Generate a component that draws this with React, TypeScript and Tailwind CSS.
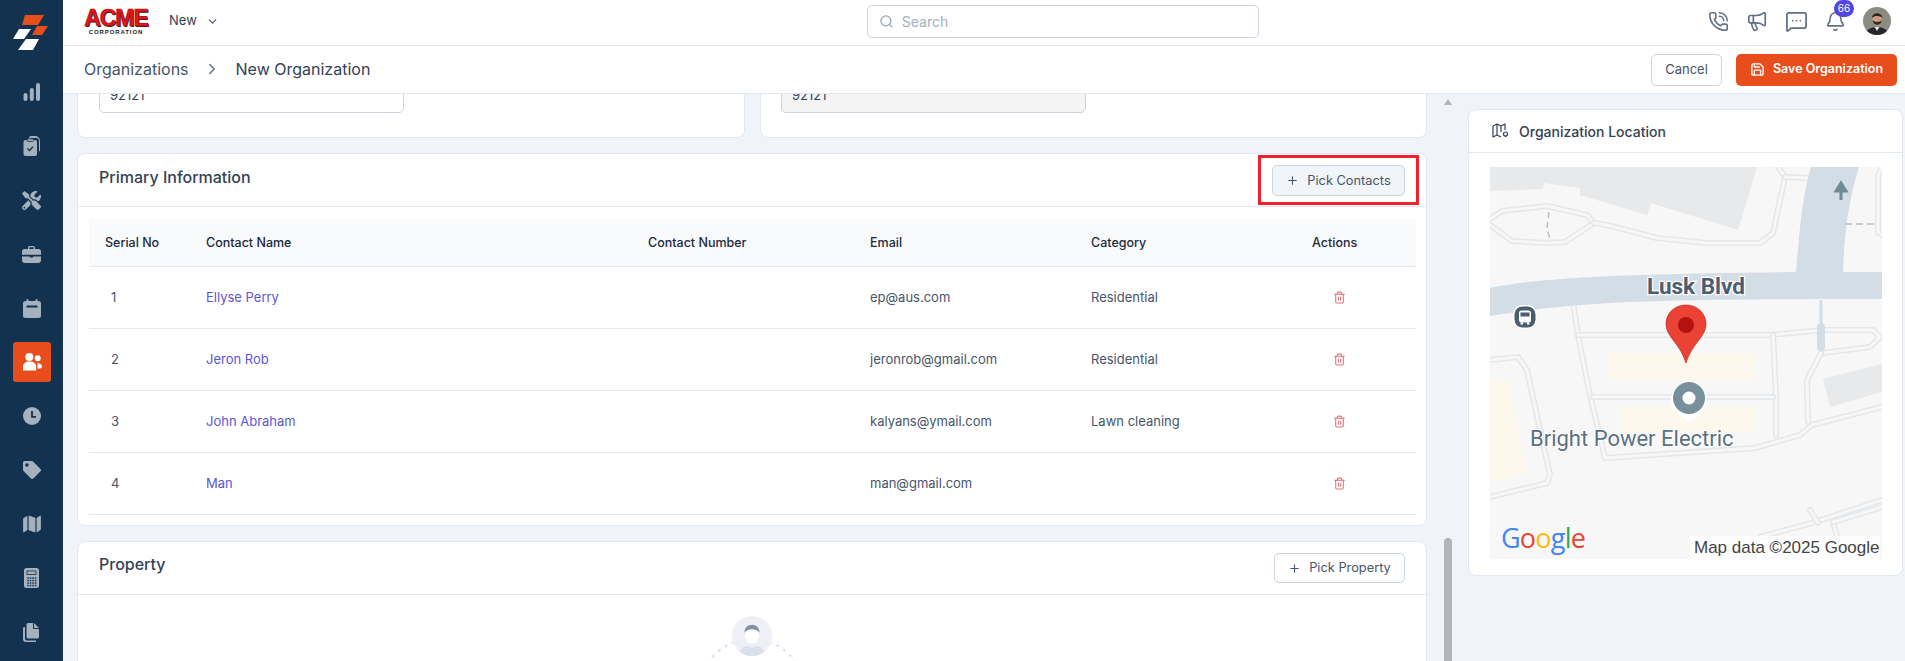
import { ChevronDown, ChevronRight, Search, PhoneCall, Megaphone, MessageSquareMore, Bell, Save, Plus, Trash2 } from 'lucide-react'
import { FaTools, FaTag } from 'react-icons/fa'

const ICON = '#a5b1bd'

function BarsIcon() {
    return (
        <svg width="18" height="18" viewBox="0 0 18 18" fill={ICON}>
            <rect x="0.5" y="10" width="4" height="8" rx="2" />
            <rect x="6.8" y="5" width="4" height="13" rx="2" />
            <rect x="13" y="0" width="4" height="18" rx="2" />
        </svg>
    )
}

function ClipboardIcon() {
    return (
        <svg width="18" height="20" viewBox="0 0 18 20" fill={ICON}>
            <path d="M6 3 V2 a2 2 0 0 1 2-2 h4 a5 5 0 0 1 5 5 v9 a2 2 0 0 1-1 1.7 V5 a3 3 0 0 0-3-3 H8 a1 1 0 0 0-1 1 Z" />
            <rect x="0.5" y="4" width="13.5" height="16" rx="2" />
            <rect x="4" y="2.8" width="6.5" height="2.6" rx="1" stroke="#12324f" strokeWidth="0.8" />
            <path d="M4.5 12.5 l2 2 l3.4-3.8" fill="none" stroke="#12324f" strokeWidth="1.3" />
        </svg>
    )
}

function BriefcaseIcon() {
    return (
        <svg width="19" height="18" viewBox="0 0 19 18" fill={ICON}>
            <path d="M6 4 V2.5 A1.5 1.5 0 0 1 7.5 1 h4 A1.5 1.5 0 0 1 13 2.5 V4 h-1.3 V2.6 a.4 .4 0 0 0-.4-.4 H7.7 a.4 .4 0 0 0-.4 .4 V4 Z" />
            <path d="M2.5 4 h14 A2.5 2.5 0 0 1 19 6.5 V9.8 H0 V6.5 A2.5 2.5 0 0 1 2.5 4 Z" />
            <path d="M0 11.5 h7.8 v1 h3.4 v-1 H19 V15 a3 3 0 0 1-3 3 H3 a3 3 0 0 1-3-3 Z" />
        </svg>
    )
}

function CalendarIcon() {
    return (
        <svg width="18" height="19" viewBox="0 0 18 19" fill={ICON}>
            <rect x="3.5" y="0" width="2" height="4" rx="1" />
            <rect x="12.5" y="0" width="2" height="4" rx="1" />
            <rect x="0" y="2" width="18" height="17" rx="2.5" />
            <rect x="3.5" y="6.5" width="11" height="2" fill="#12324f" />
        </svg>
    )
}

function ClockIcon() {
    return (
        <svg width="18" height="18" viewBox="0 0 18 18">
            <circle cx="9" cy="9" r="9" fill={ICON} />
            <path d="M9 4 V9.8 H13" fill="none" stroke="#12324f" strokeWidth="1.8" />
        </svg>
    )
}

function FoldedMapIcon() {
    return (
        <svg width="18" height="18" viewBox="0 0 18 18" fill={ICON} stroke={ICON} strokeWidth="0.8" strokeLinejoin="round">
            <polygon points="0.5,3.5 4,1.5 4,15 0.5,17" />
            <polygon points="6,1 12,3 12,17 6,15" />
            <polygon points="14,3 17.5,1 17.5,14.5 14,17" />
        </svg>
    )
}

function CalculatorIcon() {
    const dots = [10, 12.5, 15, 17.5].flatMap((y) => [4, 6.5, 9, 11.5].map((x) => ({ x, y })))
    return (
        <svg width="15" height="20" viewBox="0 0 15 20">
            <rect width="15" height="20" rx="2.5" fill={ICON} />
            <rect x="3" y="3" width="9" height="3.5" fill="none" stroke="#12324f" strokeWidth="0.8" />
            {dots.map((d) => <rect key={`${d.x}-${d.y}`} x={d.x - 0.7} y={d.y - 0.7} width="1.5" height="1.5" fill="#12324f" />)}
        </svg>
    )
}

function FilesIcon() {
    return (
        <svg width="17" height="19" viewBox="0 0 17 19" fill={ICON}>
            <path d="M5 0 h5 v5 a1 1 0 0 0 1 1 h5 v8 a1.5 1.5 0 0 1-1.5 1.5 H5 a1.5 1.5 0 0 1-1.5-1.5 V1.5 A1.5 1.5 0 0 1 5 0 Z" />
            <path d="M11 0 l5 5 h-5 Z" />
            <path d="M2 4 v11.5 a2 2 0 0 0 2 2 h9 V19 H3 a3 3 0 0 1-3-3 V5.5 A1.5 1.5 0 0 1 2 4 Z" />
        </svg>
    )
}

function UsersIcon() {
    return (
        <svg width="20" height="20" viewBox="0 0 20 20" fill="#ffffff">
            <circle cx="7.3" cy="5" r="4" />
            <circle cx="15.7" cy="6.3" r="3" />
            <path d="M1 18.5 V15 C1 11.5 3.5 9.6 7.5 9.6 C11.5 9.6 14.2 11.5 14.2 15 V18.5 Z" />
            <path d="M15.2 11 C18 11 20 12.5 20 14.6 C20 16 19 16.8 15.6 16.8 C15.6 14.6 15.6 12.8 15.2 11 Z" />
        </svg>
    )
}

function SideLogo() {
    return (
        <svg width="55" height="45" viewBox="0 0 55 45" className="ml-[2px] mt-[10px] mb-[10px] shrink-0">
            <polygon points="20,5 39,5 33,15 17,15" fill="#e84e1b" />
            <polygon points="32,16 43,16 37,25 27,25" fill="#e84e1b" />
            <polygon points="14,19 26,19 19,29 8,29" fill="#ffffff" />
            <polygon points="21,29 34,29 28,40 13,40" fill="#ffffff" />
        </svg>
    )
}

function Sidebar() {
    const rowClass = 'h-[54px] flex items-center justify-center shrink-0'
    return (
        <aside className="w-[63px] shrink-0 bg-[#12324f] flex flex-col items-center overflow-hidden">
            <SideLogo />
            <div className={rowClass}><BarsIcon /></div>
            <div className={rowClass}><ClipboardIcon /></div>
            <div className={rowClass}><FaTools size={19} color={ICON} /></div>
            <div className={rowClass}><BriefcaseIcon /></div>
            <div className={rowClass}><CalendarIcon /></div>
            <div className={rowClass}>
                <div className="w-[38px] h-[40px] rounded-[3px] bg-[#e84e1b] flex items-center justify-center">
                    <UsersIcon />
                </div>
            </div>
            <div className={rowClass}><ClockIcon /></div>
            <div className={rowClass}><FaTag size={18} color={ICON} /></div>
            <div className={rowClass}><FoldedMapIcon /></div>
            <div className={rowClass}><CalculatorIcon /></div>
            <div className={rowClass}><FilesIcon /></div>
        </aside>
    )
}

function AcmeLogo() {
    return (
        <div className="w-[62px] h-[26px] flex flex-col items-center leading-none select-none">
            <span className="font-['Liberation_Sans',sans-serif] font-bold text-[23px] leading-[20px] tracking-[-1px] text-[#e8141c] [-webkit-text-stroke:0.7px_#a80d12] [text-shadow:1px_1px_0_#222]">
                ACME
            </span>
            <span className="mt-[1px] font-['Liberation_Sans',sans-serif] font-bold text-[6px] leading-[6px] tracking-[0.9px] text-[#222]">
                CORPORATION
            </span>
        </div>
    )
}

function Avatar() {
    return (
        <svg width="28" height="28" viewBox="0 0 28 28" className="rounded-full">
            <rect width="28" height="28" fill="#8b8b84" />
            <path d="M2 28 C3 22 8 20.5 14 20 C20 20.5 25 22 26 28 Z" fill="#23262a" />
            <path d="M11.5 20 L14 24 L16.5 20 Z" fill="#e8e4de" />
            <ellipse cx="14.2" cy="12" rx="5" ry="6.6" fill="#c79c80" />
            <path d="M9 11 C9 5 19 4.5 19.5 11 C18 8.5 11 8 9 11 Z" fill="#2e2420" />
            <path d="M9.6 13 C10 19.5 18.5 19.5 19 13 C17.5 15.5 11.5 15.5 9.6 13 Z" fill="#3a2c26" />
        </svg>
    )
}

function Header() {
    return (
        <header className="h-[46px] shrink-0 bg-white border-b border-[#e2e8f0] flex items-center pl-[22px] pr-[14px] pb-[3px]">
            <AcmeLogo />
            <span className="ml-[22px] text-[13px] text-[#334155]">New</span>
            <ChevronDown size={13} className="ml-[9px] text-[#475569]" />
            <div className="ml-[648px] w-[392px] h-[33px] rounded-[5px] border border-[#cbd5e1] flex items-center pl-[11px] gap-[8px]">
                <Search size={15} className="text-[#94a3b8]" />
                <span className="text-[14px] text-[#a3aec2]">Search</span>
            </div>
            <div className="ml-auto flex items-center">
                <PhoneCall size={21} strokeWidth={1.8} className="text-[#5f6f86]" />
                <Megaphone size={22} strokeWidth={1.8} className="ml-[17px] text-[#5f6f86]" />
                <MessageSquareMore size={23} strokeWidth={1.8} className="ml-[17px] text-[#5f6f86]" />
                <div className="relative ml-[17px]">
                    <Bell size={21} strokeWidth={1.8} className="text-[#5f6f86]" />
                    <span className="absolute -top-[11px] -right-[8px] w-[20px] h-[17px] rounded-full bg-[#4f46e5] text-white text-[10px] leading-[17px] text-center">66</span>
                </div>
                <div className="ml-[17px] w-[28px] h-[28px]"><Avatar /></div>
            </div>
        </header>
    )
}

function Breadcrumb() {
    return (
        <div className="h-[48px] shrink-0 bg-white border-b border-[#e2e8f0] flex items-center pl-[21px] pr-[8px]">
            <span className="text-[16px] text-[#475569] -mt-[1px]">Organizations</span>
            <ChevronRight size={18} className="ml-[14px] text-[#64748b] -mt-[1px]" />
            <span className="ml-[15px] text-[16px] text-[#334155] -mt-[1px]">New Organization</span>
            <button className="ml-auto w-[71px] h-[32px] rounded-[5px] border border-[#cbd5e1] bg-white text-[13px] text-[#475569]">Cancel</button>
            <button className="ml-[14px] w-[161px] h-[32px] rounded-[5px] bg-[#e84e1b] text-white text-[12.5px] font-semibold flex items-center justify-center gap-[8px]">
                <Save size={15} strokeWidth={2.2} />
                Save Organization
            </button>
        </div>
    )
}

const contacts = [
    { no: 1, name: 'Ellyse Perry', email: 'ep@aus.com', category: 'Residential' },
    { no: 2, name: 'Jeron Rob', email: 'jeronrob@gmail.com', category: 'Residential' },
    { no: 3, name: 'John Abraham', email: 'kalyans@ymail.com', category: 'Lawn cleaning' },
    { no: 4, name: 'Man', email: 'man@gmail.com', category: '' },
]

const gridCols = 'grid grid-cols-[117px_442px_222px_221px_221px_1fr] items-center'

function ContactsTable() {
    return (
        <div className="ml-[11px] mr-[10px] mt-[12px] pb-[10px] text-[13px]">
            <div className={`${gridCols} h-[48px] pt-[1px] bg-[#f8fafc] border-b border-[#e2e8f0] text-[12.5px] font-medium text-[#1e293b]`}>
                <span className="pl-[16px]">Serial No</span>
                <span>Contact Name</span>
                <span>Contact Number</span>
                <span>Email</span>
                <span>Category</span>
                <span>Actions</span>
            </div>
            {contacts.map((c) => (
                <div key={c.no} className={`${gridCols} h-[62px] border-b border-[#e2e8f0] text-[#475569]`}>
                    <span className="pl-[22px]">{c.no}</span>
                    <span className="text-[#5b57d1]">{c.name}</span>
                    <span></span>
                    <span>{c.email}</span>
                    <span>{c.category}</span>
                    <span className="pl-[21px]"><Trash2 size={13} className="text-[#e5737a]" /></span>
                </div>
            ))}
        </div>
    )
}

function EmptyArt() {
    return (
        <svg width="100" height="50" viewBox="0 0 100 50" className="mx-auto mt-[21px]">
            <path d="M6 48 C14 34 26 28 33 26 M67 26 C74 28 86 34 94 48" fill="none" stroke="#dfe3ee" strokeWidth="2.5" strokeDasharray="3 5" />
            <circle cx="50" cy="20" r="20" fill="#eef0f6" />
            <path d="M38 36 C40 29 46 29 50 32 C54 29 60 29 62 36 A20 20 0 0 1 38 36 Z" fill="#dbe0ec" />
            <ellipse cx="50" cy="19" rx="7" ry="9" fill="#ffffff" />
            <path d="M42.5 17 C42 6 58 6 57.5 17 C55 12 45 12 42.5 17 Z" fill="#8290a6" />
        </svg>
    )
}

function Road({ d }: { d: string }) {
    return (
        <g fill="none" strokeLinejoin="round" strokeLinecap="round">
            <path d={d} stroke="#e3e7ea" strokeWidth="6" />
            <path d={d} stroke="#f8f7f7" strokeWidth="3" />
        </g>
    )
}

function MapView() {
    const roads = [
        'M0 52 L12 44 L57 39 L97 48 L104 56 L75 75 L57 76 L22 74 L0 58',
        'M104 56 L117 58 L167 71 L217 76 L270 76 L283 66 L295 10 L288 0',
        'M295 10 L318 11',
        'M83 135 L88 168 L100 228 L115 291 L265 281 L310 268 L322 258 L392 240',
        'M88 168 L280 168 L333 163 L383 163 L390 170 L380 180 L333 186',
        'M283 168 L286 228 L286 268',
        'M103 230 L283 230',
        'M331 186 L317 213 L318 255',
        'M0 193 L28 190 L37 203 L60 308 L57 316 L0 330',
        'M270 370 L322 356 L392 333',
        'M320 343 L328 356',
        'M343 355 L347 370',
        'M343 355 L392 340',
        'M392 0 L388 10 L388 65 L392 68',
    ]
    return (
        <svg width="392" height="392" viewBox="0 0 392 392" className="block">
            <rect width="392" height="392" fill="#f8f7f7" />
            <polygon points="0,0 267,0 248,63 161,36 157,48 90,28 90,21 54,16 53,22 0,24" fill="#e8e9eb" />
            <polygon points="333,212 340,240 392,225 392,197" fill="#e8e9eb" />
            <rect x="117" y="186" width="148" height="27" fill="#fdf8ec" />
            <rect x="130" y="240" width="135" height="25" fill="#fdf8ec" />
            <polygon points="0,213 18,213 37,306 0,315" fill="#fdf8ec" />
            {roads.map((d) => <Road key={d} d={d} />)}
            <path d="M0 121 C50 111 120 107 306 105 C310 60 312 30 321 0 H369 C358 35 354 70 353 105 H392 V132 H325 C200 133 100 132 0 149 Z" fill="#d3dde5" />
            <path d="M331 133 V170" stroke="#d3dde5" strokeWidth="3" />
            <path d="M331 160 V180" stroke="#d3dde5" strokeWidth="8" strokeLinecap="round" />
            <path d="M351 33 L351 18 M346 24 L351 16 L356 24 Z" stroke="#6f8b94" strokeWidth="3" fill="#6f8b94" />
            <path d="M355 57 H387" stroke="#b4c0c6" strokeWidth="1.5" strokeDasharray="7 4" />
            <path d="M59 45 L57 61 L60 72" fill="none" stroke="#b4c0c6" strokeWidth="1.5" strokeDasharray="6 4" />
            <text x="206" y="127" textAnchor="middle" fontFamily="Roboto, sans-serif" fontWeight="700" fontSize="22.5" fill="#4a5d71" stroke="#ffffff" strokeWidth="2.5" paintOrder="stroke">Lusk Blvd</text>
            <rect x="23" y="138" width="24" height="24" rx="9" fill="#ffffff" />
            <rect x="24.5" y="139.5" width="21" height="21" rx="8" fill="#4a5d71" />
            <rect x="29" y="143.5" width="12" height="12" rx="2.5" fill="#ffffff" />
            <rect x="30.5" y="145.5" width="9" height="4" fill="#4a5d71" />
            <rect x="30.5" y="155.5" width="2.5" height="2" fill="#ffffff" />
            <rect x="37" y="155.5" width="2.5" height="2" fill="#ffffff" />
            <path d="M196 138 C184 138 176 147 176 157 C176 170 190 176 196 196 C202 176 216 170 216 157 C216 147 208 138 196 138 Z" fill="#ea4335" stroke="#c5221f" strokeWidth="0.7" />
            <circle cx="196" cy="158" r="8" fill="#b3130f" />
            <path d="M199 256 L186 245 A18 18 0 1 1 212 245 Z" fill="#ffffff" />
            <circle cx="199" cy="231" r="16" fill="#78909c" />
            <circle cx="199" cy="231" r="6.5" fill="#ffffff" />
            <text x="40" y="279" fontFamily="Roboto, sans-serif" fontSize="22" fill="#5a7182" stroke="#ffffff" strokeWidth="2" paintOrder="stroke">Bright Power Electric</text>
            <text x="11" y="381" fontFamily="'Open Sans', sans-serif" fontSize="27" fontWeight="500" letterSpacing="-0.8">
                <tspan fill="#4285f4">G</tspan><tspan fill="#ea4335">o</tspan><tspan fill="#fbbc05">o</tspan><tspan fill="#4285f4">g</tspan><tspan fill="#34a853">l</tspan><tspan fill="#ea4335">e</tspan>
            </text>
            <rect x="200" y="369" width="190" height="23" fill="#ffffff" fillOpacity="0.7" />
            <text x="204" y="386" fontFamily="'Liberation Sans', sans-serif" fontSize="17" fill="#444444">Map data ©2025 Google</text>
        </svg>
    )
}

function MapIcon() {
    return (
        <svg width="17" height="16" viewBox="0 0 17 16" fill="none" stroke="#334155" strokeWidth="1.2" strokeLinejoin="round">
            <path d="M1 3 L5 1 L9 3 L13 1 V7 M9 3 V9 M5 1 V12 M1 3 V14 L5 12 L9 14" />
            <circle cx="13.5" cy="11" r="2" />
            <path d="M13.5 13 V14" />
        </svg>
    )
}

export default function App() {
    return (
        <div className="h-screen w-full flex overflow-hidden bg-[#f0f4f9] font-['Inter',sans-serif]">
            <Sidebar />
            <div className="flex-1 min-w-0 flex flex-col">
                <Header />
                <Breadcrumb />
                <div className="flex-1 min-h-0 flex pl-[14px] overflow-hidden">
                    <main className="w-[1350px] shrink-0 flex flex-col gap-[15px] overflow-hidden">
                        <div className="h-[44px] shrink-0 flex gap-[15px]">
                            <div className="flex-1 bg-white border border-[#e2e8f0] border-t-0 rounded-b-[8px] pl-[21px] pb-[24px] flex items-end">
                                <div className="w-[305px] h-[36px] shrink-0 rounded-[5px] border border-[#cbd5e1] bg-white pl-[10px] text-[13px] leading-[34px] text-[#334155]">92121</div>
                            </div>
                            <div className="flex-1 bg-white border border-[#e2e8f0] border-t-0 rounded-b-[8px] pl-[20px] pb-[24px] flex items-end">
                                <div className="w-[305px] h-[36px] shrink-0 rounded-[5px] border border-[#cbd5e1] bg-[#f4f4f5] pl-[10px] text-[13px] leading-[34px] text-[#334155]">92121</div>
                            </div>
                        </div>
                        <section className="shrink-0 bg-white border border-[#e2e8f0] rounded-[8px]">
                            <div className="h-[53px] border-b border-[#e2e8f0] flex items-center justify-between pl-[21px] pr-[7px]">
                                <h2 className="text-[16px] font-medium text-[#334155] -mt-[7px]">Primary Information</h2>
                                <div className="w-[161px] h-[50px] border-[3px] border-[#f0202c] flex items-center pl-[11px]">
                                    <button className="mt-[1px] w-[133px] h-[31px] rounded-[5px] border border-[#cbd5e1] bg-[#f1f5f9] text-[12.8px] text-[#475569] flex items-center justify-center gap-[8px]">
                                        <Plus size={13} />
                                        Pick Contacts
                                    </button>
                                </div>
                            </div>
                            <ContactsTable />
                        </section>
                        <section className="shrink-0 h-[200px] bg-white border border-[#e2e8f0] rounded-[8px]">
                            <div className="h-[53px] border-b border-[#e2e8f0] flex items-center justify-between pl-[21px] pr-[21px]">
                                <h2 className="text-[16px] font-medium text-[#334155] -mt-[9px]">Property</h2>
                                <button className="w-[131px] h-[30px] rounded-[5px] border border-[#cbd5e1] bg-white text-[12.8px] text-[#475569] flex items-center justify-center gap-[8px]">
                                    <Plus size={13} />
                                    Pick Property
                                </button>
                            </div>
                            <EmptyArt />
                        </section>
                    </main>
                    <div className="w-[41px] shrink-0 flex flex-col items-center">
                        <div className="mt-[5px] w-0 h-0 border-x-[4px] border-x-transparent border-b-[6px] border-b-[#b4b4b8]"></div>
                        <div className="mt-auto w-[8px] h-[123px] rounded-t-[4px] bg-[#b4b4b8]"></div>
                    </div>
                    <aside className="w-[435px] shrink-0 mt-[15px] self-start bg-white border border-[#e2e8f0] rounded-[8px]">
                        <div className="h-[43px] border-b border-[#e2e8f0] flex items-center pl-[23px] gap-[10px]">
                            <MapIcon />
                            <span className="text-[14px] font-medium text-[#334155]">Organization Location</span>
                        </div>
                        <div className="pl-[21px] pt-[14px] pb-[16px]">
                            <MapView />
                        </div>
                    </aside>
                </div>
            </div>
        </div>
    )
}
